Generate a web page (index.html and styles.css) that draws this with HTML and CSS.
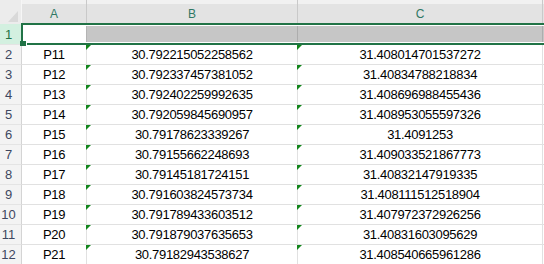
FILE: index.html
```html
<!DOCTYPE html>
<html>
<head>
<meta charset="utf-8">
<link rel="stylesheet" href="styles.css">
</head>
<body>
<div class="sheet">
  <div class="grid">
    <div class="corner"></div>
    <div class="colhdr">A</div>
    <div class="colhdr">B</div>
    <div class="colhdr">C</div>
    <div class="colhdr filler"></div>

    <div class="rowhdr sel">1</div>
    <div class="cell active"></div>
    <div class="cell range"></div>
    <div class="cell range"></div>
    <div class="cell range filler"></div>

    <div class="rowhdr">2</div><div class="cell">P11</div><div class="cell num">30.792215052258562</div><div class="cell num">31.408014701537272</div><div class="cell filler"></div>
    <div class="rowhdr">3</div><div class="cell">P12</div><div class="cell num">30.792337457381052</div><div class="cell num">31.40834788218834</div><div class="cell filler"></div>
    <div class="rowhdr">4</div><div class="cell">P13</div><div class="cell num">30.792402259992635</div><div class="cell num">31.408696988455436</div><div class="cell filler"></div>
    <div class="rowhdr">5</div><div class="cell">P14</div><div class="cell num">30.792059845690957</div><div class="cell num">31.408953055597326</div><div class="cell filler"></div>
    <div class="rowhdr">6</div><div class="cell">P15</div><div class="cell num">30.79178623339267</div><div class="cell num">31.4091253</div><div class="cell filler"></div>
    <div class="rowhdr">7</div><div class="cell">P16</div><div class="cell num">30.79155662248693</div><div class="cell num">31.409033521867773</div><div class="cell filler"></div>
    <div class="rowhdr">8</div><div class="cell">P17</div><div class="cell num">30.79145181724151</div><div class="cell num">31.40832147919335</div><div class="cell filler"></div>
    <div class="rowhdr">9</div><div class="cell">P18</div><div class="cell num">30.791603824573734</div><div class="cell num">31.408111512518904</div><div class="cell filler"></div>
    <div class="rowhdr">10</div><div class="cell">P19</div><div class="cell num">30.791789433603512</div><div class="cell num">31.407972372926256</div><div class="cell filler"></div>
    <div class="rowhdr">11</div><div class="cell">P20</div><div class="cell num">30.791879037635653</div><div class="cell num">31.40831603095629</div><div class="cell filler"></div>
    <div class="rowhdr">12</div><div class="cell">P21</div><div class="cell num">30.79182943538627</div><div class="cell num">31.408540665961286</div><div class="cell filler"></div>
  </div>
  <div class="selection"><span class="handle"></span></div>
</div>
</body>
</html>
```

FILE: styles.css
```css
html, body {
  margin: 0;
  padding: 0;
  background: #ffffff;
  overflow: hidden;
}

.sheet {
  position: relative;
  width: 544px;
  height: 264px;
  overflow: hidden;
  font-family: "Liberation Sans", Arial, sans-serif;
}

.grid {
  display: grid;
  grid-template-columns: 22px 65px 211px 245px 1fr;
  grid-template-rows: 24px 21px repeat(11, 20px);
}

.corner {
  position: relative;
  background: #ececec;
  border-right: 1px solid #f6f6f6;
  box-sizing: border-box;
}
.corner::after {
  content: "";
  position: absolute;
  right: 3px;
  bottom: 2px;
  width: 10px;
  height: 11px;
  background: #d9d9d9;
  clip-path: polygon(100% 0, 100% 100%, 0 100%);
}

.colhdr {
  box-sizing: border-box;
  padding-top: 4px;
  background: linear-gradient(#f1f1f1 0 4px, #e3e3e3 4px);
  border-right: 1px solid #c9c9c9;
  display: flex;
  align-items: center;
  justify-content: center;
  font-size: 12px;
  color: #2f7863;
}
.colhdr.filler {
  border-right: none;
}

.rowhdr {
  box-sizing: border-box;
  background: #f3f3f3;
  border-right: 1px solid #d4d4d4;
  border-bottom: 1px solid #e4e4e4;
  display: flex;
  align-items: center;
  justify-content: center;
  padding-right: 4px;
  font-size: 13px;
  color: #3e4760;
}
.rowhdr.sel {
  background: #d3f0e0;
  color: #217346;
}

.cell {
  position: relative;
  box-sizing: border-box;
  border-right: 1px solid #e1e1e1;
  border-bottom: 1px solid #e1e1e1;
  display: flex;
  align-items: center;
  justify-content: center;
  font-size: 13px;
  letter-spacing: -0.3px;
  color: #000000;
  white-space: nowrap;
}
.cell.filler {
  border-right: none;
}
.cell.active {
  background: #ffffff;
  border-right-color: #b4b4b4;
}
.cell.range {
  background: #c6c6c6;
  border-right-color: #adadad;
}

.cell.num::before {
  content: "";
  position: absolute;
  top: 0;
  left: -1px;
  width: 0;
  height: 0;
  border-top: 5px solid #13851c;
  border-right: 5px solid transparent;
}

.selection {
  position: absolute;
  top: 23px;
  left: 21px;
  width: 540px;
  height: 22px;
  box-sizing: border-box;
  border: 2px solid #217346;
  box-shadow: inset 0 0 0 1px #ffffff;
}
.handle {
  position: absolute;
  left: -3px;
  bottom: -3px;
  width: 6px;
  height: 5px;
  background: #217346;
  box-shadow: 1px 0 0 #ffffff;
}
```
